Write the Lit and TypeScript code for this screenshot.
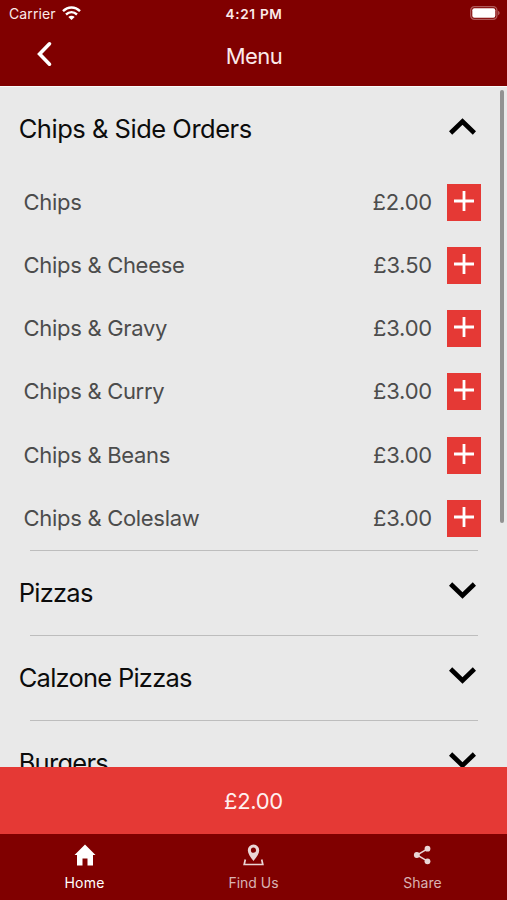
import { LitElement, html, css, svg } from "lit";
import { customElement } from "lit/decorators.js";

interface Item { name: string; price: string; }
interface Section { title: string; cls: string; open: boolean; items: Item[]; }

const sections: Section[] = [
  {
    title: "Chips & Side Orders", cls: "label wide", open: true,
    items: [
      { name: "Chips", price: "£2.00" },
      { name: "Chips & Cheese", price: "£3.50" },
      { name: "Chips & Gravy", price: "£3.00" },
      { name: "Chips & Curry", price: "£3.00" },
      { name: "Chips & Beans", price: "£3.00" },
      { name: "Chips & Coleslaw", price: "£3.00" },
    ],
  },
  { title: "Pizzas", cls: "label", open: false, items: [] },
  { title: "Calzone Pizzas", cls: "label", open: false, items: [] },
  { title: "Burgers", cls: "label", open: false, items: [] },
];

@customElement("app-root")
export class AppRoot extends LitElement {
  static styles = css`
    :host { display: flex; flex-direction: column; width: 507px; height: 900px; overflow: hidden;
      background: #e9e9e9; font-family: Inter, "Liberation Sans", sans-serif; }
    * { box-sizing: border-box; }
    svg { display: block; flex: none; }
    header { height: 86px; flex: none; background: #800000; color: #fbeaea; }
    .status { height: 27px; display: grid; grid-template-columns: 1fr auto 1fr; align-items: center; padding: 0 7px 0 9px; font-size: 14px; }
    .carrier { display: flex; align-items: center; gap: 6px; letter-spacing: 0.1px; }
    .carrier svg { margin-top: -2px; }
    .time { font-weight: 600; font-size: 13.6px; letter-spacing: 0.7px; margin-right: 1px; }
    .battery { justify-self: end; margin-top: -1px; }
    .nav { height: 58px; display: grid; grid-template-columns: 1fr auto 1fr; align-items: center; }
    .back { margin-left: 36px; margin-top: -4px; }
    .title { font-size: 22px; letter-spacing: -0.6px; margin-left: 1px; }
    main { flex: 1; min-height: 0; overflow: hidden; position: relative; padding-top: 0.3px; border-top: 1px solid #fafafa; }
    .thumb { position: absolute; right: 3px; top: 3px; width: 4px; height: 433px; border-radius: 2px; background: #929292; }
    .head { height: 83.6px; display: flex; align-items: center; justify-content: space-between; padding: 0 31px 0 18.7px; color: #0c0c0c; font-size: 25.5px; letter-spacing: -0.75px; }
    .label { padding-bottom: 1.6px; }
    .wide { letter-spacing: -0.48px; padding-bottom: 1px; }
    .head svg { margin-bottom: 6px; }
    .item { height: 63.15px; display: flex; align-items: center; padding: 0 26px 0 23.5px; color: #4c4c4c; font-size: 22px; letter-spacing: -0.3px; }
    .name { flex: 1; padding-bottom: 1px; }
    .price { margin-right: 15px; padding-bottom: 1px; letter-spacing: -0.2px; }
    .add { width: 34px; height: 37px; background: #e53935; display: flex; justify-content: center; padding-top: 7px; }
    .line { height: 1.5px; margin: 0 29px 0 30px; background: #bdbdbd; }
    .total { height: 67px; flex: none; background: #e53935; color: #fff0f0; display: flex; align-items: center; justify-content: center; font-size: 22px; letter-spacing: -0.3px; }
    footer { height: 66px; flex: none; background: #800000; display: grid; grid-template-columns: repeat(3, 1fr); }
    .tab { display: flex; flex-direction: column; align-items: center; padding-top: 9px; gap: 6px; color: #d9b3b3; font-size: 14px; line-height: 20px; }
    .tab.on { color: #fff; }
    .tab.on span { letter-spacing: 0.2px; }
  `;

  private chevron(up: boolean) {
    return svg`<svg width="27" height="17" viewBox="0 0 27 17" fill="none" stroke="#000" stroke-width="4.6"><path d=${up ? "M1.600 15 13.500 3.500 25.400 15" : "M1.600 2 13.500 13.500 25.400 2"}/></svg>`;
  }

  render() {
    return html`
      <header>
        <div class="status">
          <div class="carrier"><span>Carrier</span>
            <svg width="19" height="14" viewBox="0 0 19 14" fill="none" stroke="#fff" stroke-width="2.4">
              <path d="M1 5.2C6 .2 13 .2 18 5.2"/><path d="M4 8.500c3.300-3 7.700-3 11 0"/><path d="M6.300 10.900c1.900-1.700 4.500-1.700 6.400 0L9.500 14z" fill="#fff" stroke="none"/>
            </svg></div>
          <div class="time">4:21 PM</div>
          <svg class="battery" width="30" height="14" viewBox="0 0 30 14">
            <rect x=".7" y=".7" width="26.200" height="12.600" rx="3.700" fill="none" stroke="#b05a5a" stroke-width="1.300"/>
            <rect x="2.300" y="2.300" width="23" height="9.400" rx="2" fill="#fff"/>
            <path d="M28 4.800c2.200.8 2.200 3.600 0 4.400z" fill="#b05a5a"/>
          </svg>
        </div>
        <div class="nav">
          <svg class="back" width="17" height="26" viewBox="0 0 17 26" fill="none" stroke="#fff" stroke-width="3.600" stroke-linecap="round"><path d="M13.500 2.800 3.600 13l9.900 10.200"/></svg>
          <div class="title">Menu</div>
        </div>
      </header>
      <main>
        ${sections.map((s, i) => html`
          ${i ? html`<div class="line"></div>` : ""}
          <div class="head"><span class=${s.cls}>${s.title}</span>${this.chevron(s.open)}</div>
          ${s.items.map((it) => html`
            <div class="item"><span class="name">${it.name}</span><span class="price">${it.price}</span>
              <span class="add"><svg width="20" height="20" viewBox="0 0 20 20" stroke="#fff" stroke-width="2.800"><path d="M10 0v20M0 10h20"/></svg></span>
            </div>`)}`)}
        <div class="thumb"></div>
      </main>
      <div class="total">£2.00</div>
      <footer>
        <div class="tab on">
          <svg width="24" height="24" viewBox="0 0 24 24" fill="#fff"><path d="M12 1.500 1.500 12H4V22.500H9.500V15.500h5v7H20V12h2.500z"/></svg>
          <span>Home</span></div>
        <div class="tab">
          <svg width="24" height="24" viewBox="0 0 24 24" fill="#ead6d6"><path fill-rule="evenodd" d="M11.500 18C8.500 14 5.800 10.600 5.800 7.200a5.700 5.700 0 0 1 11.400 0C17.200 10.600 14.500 14 11.500 18zM11.500 4.600a2.600 2.600 0 1 0 0 5.200 2.600 2.600 0 0 0 0-5.200z"/><path d="M3.300 16.500 2.200 21.500h18.600L19.700 16.500" fill="none" stroke="#ead6d6" stroke-width="1.700"/></svg>
          <span>Find Us</span></div>
        <div class="tab">
          <svg width="24" height="24" viewBox="0 0 24 24" fill="#ead6d6"><path d="M16.500 5.800 6 12l10.500 6.200" fill="none" stroke="#ead6d6" stroke-width="1.500"/><circle cx="16.500" cy="5.700" r="2.900"/><circle cx="5.800" cy="12" r="2.900"/><circle cx="16.500" cy="18.300" r="2.900"/></svg>
          <span>Share</span></div>
      </footer>`;
  }
}
